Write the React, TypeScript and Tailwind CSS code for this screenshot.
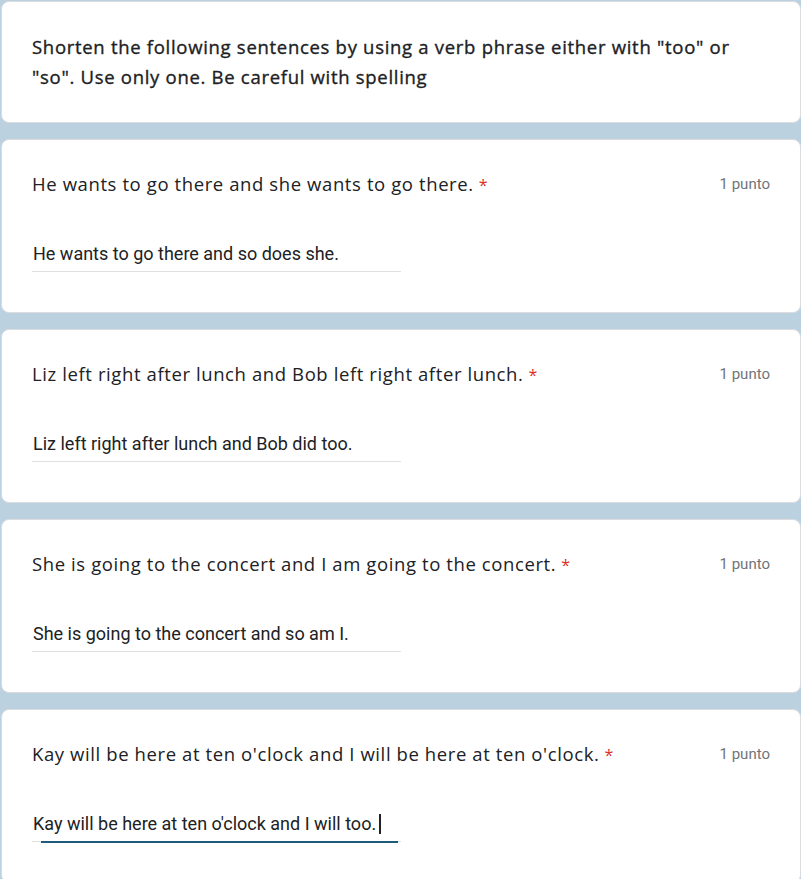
import React from "react";

const questions = [
  {
    title: "He wants to go there and she wants to go there.",
    answer: "He wants to go there and so does she.",
  },
  {
    title: "Liz left right after lunch and Bob left right after lunch.",
    answer: "Liz left right after lunch and Bob did too.",
  },
  {
    title: "She is going to the concert and I am going to the concert.",
    answer: "She is going to the concert and so am I.",
  },
  {
    title: "Kay will be here at ten o'clock and I will be here at ten o'clock.",
    answer: "Kay will be here at ten o'clock and I will too.",
    focused: true,
  },
];

function Question({ title, answer, focused }: { title: string; answer: string; focused?: boolean }) {
  return (
    <div className="bg-white rounded-lg border border-[#dadce0] pl-[30px] pr-[30px] pt-[32px] pb-[40px]">
      <div className="flex items-start justify-between">
        <div className="text-[18.5px] leading-6 text-[#202124] font-['Open_Sans',sans-serif] tracking-[0.6px]">
          {title}
          <span className="text-[#d93025] ml-[5px] text-[16px]">*</span>
        </div>
        <div className="text-[15px] leading-6 text-[#70757a] font-['Roboto',sans-serif] shrink-0 ml-4">1 punto</div>
      </div>
      <div className="mt-[45px] w-[369px] relative">
        <div className="flex items-start h-[29px] leading-[24px] text-[18px] text-[#202124] font-['Roboto',sans-serif] pl-[1px]">
          {answer}
          {focused && <span className="inline-block w-[2px] h-[20px] mt-[2px] bg-[#202124] ml-[3px]" />}
        </div>
        <div className="h-px bg-[#e0e0e0]" />
        {focused && <div className="absolute left-[9px] right-[3px] bottom-[-1px] h-[2px] bg-[#1d5b7a]" />}
      </div>
    </div>
  );
}

export default function App() {
  return (
    <div className="min-h-[879px] bg-[#bcd1df] pl-[1px] pt-[1px] flex flex-col gap-[16px] overflow-hidden">
      <div className="bg-white rounded-lg border border-[#dadce0] pl-[30px] pr-[30px] pt-[30px] pb-[30px]">
        <p className="text-[18.5px] leading-[30px] text-[#202124] font-['Open_Sans',sans-serif] tracking-[0.7px] [-webkit-text-stroke:0.35px_#202124]">
          Shorten the following sentences by using a verb phrase either with "too" or "so". Use only one. Be careful with spelling
        </p>
      </div>
      {questions.map((q, i) => (
        <Question key={i} {...q} />
      ))}
    </div>
  );
}
